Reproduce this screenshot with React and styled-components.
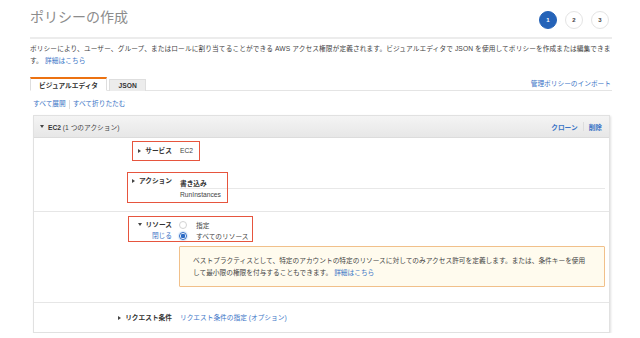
import React from "react";
import styled, { createGlobalStyle } from "styled-components";

const GlobalStyle = createGlobalStyle`
  html, body {
    margin: 0;
    padding: 0;
    background: #fff;
  }
  body {
    font-family: "Liberation Sans", "Noto Sans CJK JP", sans-serif;
    color: #444;
    font-size: 6.7px;
  }
`;

const Page = styled.div`
  width: 582px;
  padding-left: 30px;
`;

const HeaderRow = styled.div`
  display: flex;
  justify-content: space-between;
  height: 37px;
  border-bottom: 2px solid #ececec;
`;

const Title = styled.h1`
  margin: 6px 0 0;
  font-size: 14px;
  line-height: 20px;
  font-weight: 400;
  color: #8c8c8c;
  font-family: "Noto Sans CJK JP", sans-serif;
`;

const Steps = styled.div`
  display: flex;
  gap: 8px;
  margin: 11px 3px 0 0;
`;

const Step = styled.div`
  width: 18px;
  height: 18px;
  box-sizing: border-box;
  border-radius: 50%;
  display: flex;
  align-items: center;
  justify-content: center;
  font-size: 6px;
  font-weight: 700;
  color: ${(p) => (p.$active ? "#fff" : "#444")};
  background: ${(p) => (p.$active ? "#2563b8" : "#fff")};
  border: 1px solid ${(p) => (p.$active ? "#2563b8" : "#e4e4e4")};
`;

const Description = styled.p`
  margin: 4px 0 0;
  line-height: 12px;
  color: #444;
  white-space: nowrap;
  letter-spacing: 0.1px;
`;

const Link = styled.a`
  color: #3a74c6;
  text-decoration: none;
  font-weight: ${(p) => (p.$bold ? 700 : 400)};
`;

const TabBar = styled.div`
  display: flex;
  align-items: flex-end;
  margin-top: 9px;
  height: 14px;
  border-bottom: 1px solid #e4e4e4;
`;

const Tab = styled.div`
  box-sizing: border-box;
  height: ${(p) => (p.$active ? "14px" : "12px")};
  padding: 0 ${(p) => (p.$active ? "8px" : "8.5px")};
  margin-right: 2px;
  display: flex;
  align-items: center;
  font-weight: 700;
  color: #333;
  background: ${(p) => (p.$active ? "#fff" : "#ececec")};
  border: 1px solid #dedede;
  border-bottom: none;
  border-top: ${(p) => (p.$active ? "2px solid #ec7211" : "1px solid #dedede")};
  margin-bottom: -1px;
  ${(p) => p.$active && "border-bottom: 1px solid #fff;"}
`;

const TabSpacer = styled.div`
  flex: 1;
  align-self: center;
  text-align: right;
  padding-right: 1px;
`;

const ExpandLinks = styled.div`
  display: flex;
  align-items: center;
  gap: 3px;
  margin: 7px 0 0 3px;
  line-height: 12px;
`;

const Sep = styled.span`
  width: 1px;
  height: 9px;
  background: #ddd;
`;

const Panel = styled.div`
  margin: 5px 2px 0 3px;
  border: 1px solid #e1e1e1;
  box-shadow: 1px 1px 2px rgba(0, 0, 0, 0.12);
`;

const PanelHeader = styled.div`
  height: 21px;
  display: flex;
  align-items: center;
  justify-content: space-between;
  padding: 0 7px 0 6px;
  background: linear-gradient(#f4f4f4, #e7e7e7);
  border-bottom: 1px solid #dcdcdc;
  color: #444;
`;

const HeaderLeft = styled.div`
  display: flex;
  align-items: center;
  gap: 4px;
  b {
    color: #333;
  }
`;

const HeaderActions = styled.div`
  display: flex;
  align-items: center;
  gap: 5px;
`;

const Section = styled.div`
  padding: ${(p) => p.$pad || "0"};
  border-top: ${(p) => (p.$divided ? "1px solid #e6e6e6" : "none")};
`;

const Row = styled.div`
  position: relative;
  display: grid;
  grid-template-columns: 138px 1fr;
  column-gap: 8px;
  padding-right: 4px;
  align-items: ${(p) => p.$align || "start"};
  height: ${(p) => p.$h || "auto"};
  margin-top: ${(p) => p.$mt || "0"};
`;

const LabelCol = styled.div`
  display: flex;
  flex-direction: column;
  align-items: flex-end;
`;

const Label = styled.div`
  display: flex;
  align-items: center;
  gap: 4px;
  font-weight: 700;
  color: #333;
  line-height: ${(p) => p.$lh || "10px"};
`;

const Caret = styled.span`
  width: 0;
  height: 0;
  border-style: solid;
  ${(p) =>
    p.$open
      ? "border-width: 3px 2.5px 0 2.5px; border-color: #444 transparent transparent transparent;"
      : "border-width: 2.5px 0 2.5px 3px; border-color: transparent transparent transparent #444;"}
`;

const Value = styled.div`
  color: #444;
  line-height: ${(p) => p.$lh || "10px"};
`;

const ValueHeading = styled.div`
  padding-top: 3px;
  line-height: 9px;
  font-weight: 700;
  color: #333;
  border-bottom: 1px solid #e8e8e8;
`;

const ValueLine = styled.div`
  line-height: 12px;
  color: #444;
`;

const Highlight = styled.span`
  position: absolute;
  box-sizing: border-box;
  border: 1.5px solid #e6553e;
  pointer-events: none;
  left: ${(p) => p.$x}px;
  top: ${(p) => p.$y}px;
  width: ${(p) => p.$w}px;
  height: ${(p) => p.$h}px;
`;

const RadioLine = styled.label`
  display: flex;
  align-items: center;
  gap: 9px;
  height: 11px;
  margin-left: -1px;
  color: #444;
`;

const Radio = styled.span`
  width: 8px;
  height: 8px;
  box-sizing: border-box;
  border-radius: 50%;
  border: 1px solid ${(p) => (p.$checked ? "#2d6bc4" : "#d2d2d2")};
  background: ${(p) =>
    p.$checked ? "radial-gradient(circle, #2d6bc4 0 2px, #fff 2.5px)" : "#fff"};
  box-shadow: ${(p) => (p.$checked ? "0 0 2px #7fb0e8" : "none")};
`;

const InfoBox = styled.div`
  margin: 5px 0 0 -1px;
  padding: 8px 13px 7px;
  background: #fffbee;
  border: 1px solid #f1c08a;
  border-radius: 1px;
  line-height: 12px;
  color: #444;
  white-space: nowrap;
`;

export default function App() {
  return (
    <>
      <GlobalStyle />
      <Page>
        <HeaderRow>
          <Title>ポリシーの作成</Title>
          <Steps>
            <Step $active>1</Step>
            <Step>2</Step>
            <Step>3</Step>
          </Steps>
        </HeaderRow>

        <Description>
          ポリシーにより、ユーザー、グループ、またはロールに割り当てることができる AWS
          アクセス権限が定義されます。ビジュアルエディタで JSON
          を使用してポリシーを作成または編集できま
          <br />
          す。 <Link href="#">詳細はこちら</Link>
        </Description>

        <TabBar>
          <Tab $active>ビジュアルエディタ</Tab>
          <Tab>JSON</Tab>
          <TabSpacer>
            <Link href="#">管理ポリシーのインポート</Link>
          </TabSpacer>
        </TabBar>

        <ExpandLinks>
          <Link href="#">すべて展開</Link>
          <Sep />
          <Link href="#">すべて折りたたむ</Link>
        </ExpandLinks>

        <Panel>
          <PanelHeader>
            <HeaderLeft>
              <Caret $open />
              <span>
                <b>EC2</b> (1 つのアクション)
              </span>
            </HeaderLeft>
            <HeaderActions>
              <Link href="#" $bold>クローン</Link>
              <Sep />
              <Link href="#" $bold>削除</Link>
            </HeaderActions>
          </PanelHeader>

          <Section $pad="3px 0 10px">
            <Row $align="center" $h="20px">
              <LabelCol>
                <Label>
                  <Caret />
                  サービス
                </Label>
              </LabelCol>
              <Value>EC2</Value>
              <Highlight $x={98} $y={0} $w={68} $h={20} />
            </Row>

            <Row $mt="15px">
              <LabelCol>
                <Label>
                  <Caret />
                  アクション
                </Label>
              </LabelCol>
              <div>
                <ValueHeading>書き込み</ValueHeading>
                <ValueLine>RunInstances</ValueLine>
              </div>
              <Highlight $x={93} $y={-4} $w={101} $h={31} />
            </Row>
          </Section>

          <Section $divided $pad="7px 0 15px">
            <Row>
              <LabelCol>
                <Label $lh="11px">
                  <Caret $open />
                  リソース
                </Label>
                <Value $lh="11px">
                  <Link href="#">閉じる</Link>
                </Value>
              </LabelCol>
              <div>
                <RadioLine>
                  <Radio />
                  指定
                </RadioLine>
                <RadioLine>
                  <Radio $checked />
                  すべてのリソース
                </RadioLine>
              </div>
              <Highlight $x={94} $y={-3} $w={125} $h={26} />
            </Row>
            <Row>
              <div />
              <InfoBox>
                ベストプラクティスとして、特定のアカウントの特定のリソースに対してのみアクセス許可を定義します。または、条件キーを使用
                <br />
                して最小限の権限を付与することもできます。 <Link href="#">詳細はこちら</Link>
              </InfoBox>
            </Row>
          </Section>

          <Section $divided>
            <Row $align="center" $h="29px">
              <LabelCol>
                <Label>
                  <Caret />
                  リクエスト条件
                </Label>
              </LabelCol>
              <Value>
                <Link href="#">リクエスト条件の指定 (オプション)</Link>
              </Value>
            </Row>
          </Section>
        </Panel>
      </Page>
    </>
  );
}
